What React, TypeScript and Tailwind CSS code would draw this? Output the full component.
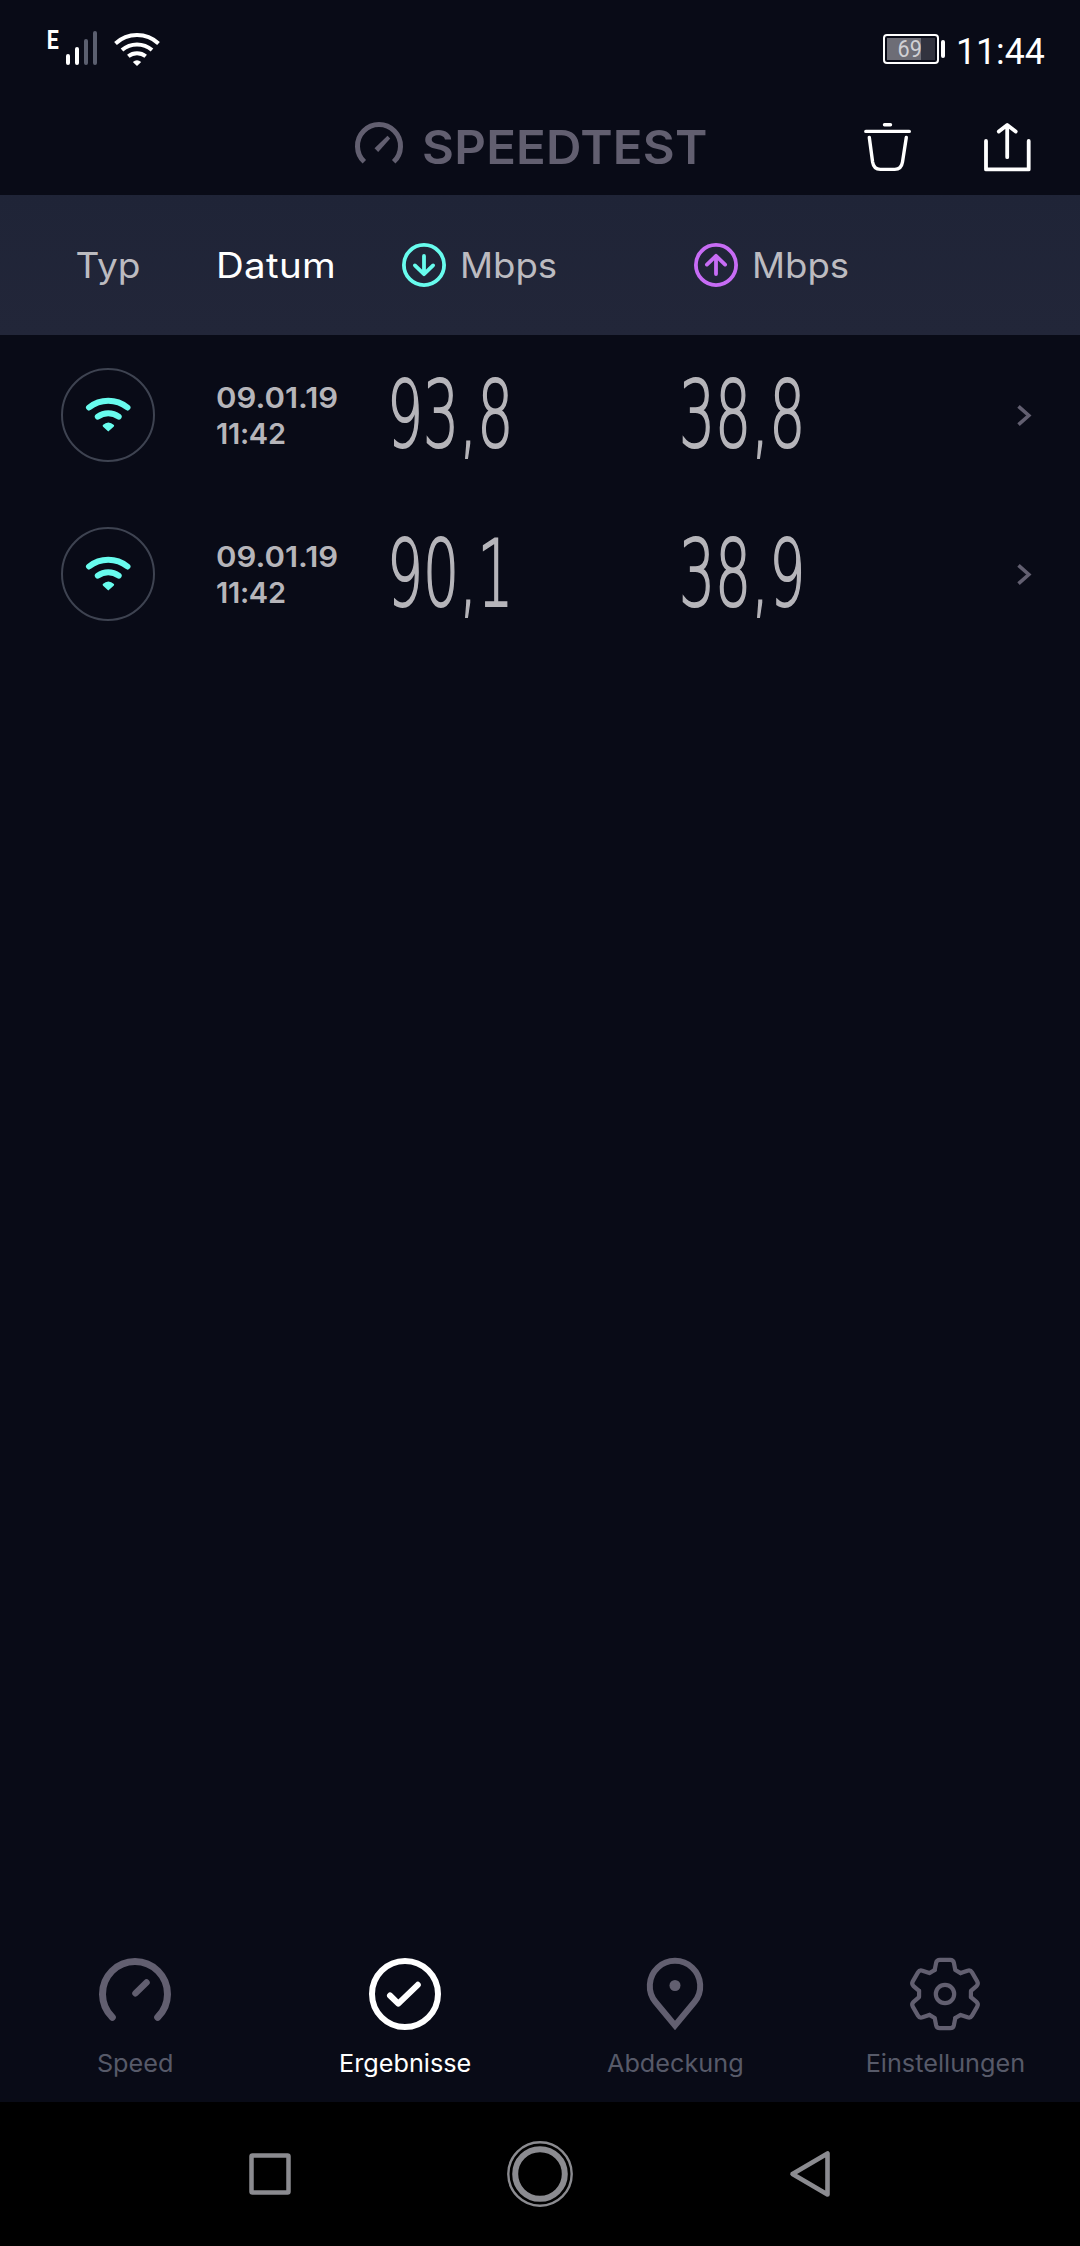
import type { ReactNode } from 'react'

interface Result {
  date: string
  time: string
  down: string
  up: string
}

const results: Result[] = [
  { date: '09.01.19', time: '11:42', down: '93,8', up: '38,8' },
  { date: '09.01.19', time: '11:42', down: '90,1', up: '38,9' },
]

function StatusBar() {
  return (
    <div className="flex h-[98px] items-start justify-between pl-[46px] pr-[37px] pt-[28px]">
      <div className="flex items-start">
        <span className="w-[18px] origin-left scale-x-[0.82] pl-[1px] font-[Roboto] text-[26px] leading-[24px] font-bold text-white">
          E
        </span>
        <svg width="98" height="40" viewBox="64 28 98 40" fill="none">
          <rect x="66" y="54" width="4" height="11" rx="2" fill="#fff" />
          <rect x="75" y="47" width="4" height="18" rx="2" fill="#fff" />
          <rect x="84" y="39" width="4" height="26" rx="2" fill="#5b5f6f" />
          <rect x="93" y="31" width="4" height="34" rx="2" fill="#5b5f6f" />
          <g stroke="#fff" strokeWidth="4">
            <path d="M115.5 43.5a31.6 31.6 0 0 1 43 0" />
            <path d="M122 50a23 23 0 0 1 30 0" />
            <path d="M128.3 56.2a14 14 0 0 1 17.4 0" />
          </g>
          <path d="M132.8 62q4.2-3.6 8.4 0l-4.2 4z" fill="#fff" />
        </svg>
      </div>

      <div className="flex items-start">
        <div className="mt-[6px] flex items-center gap-[2px]">
          <div className="flex h-[30px] w-[56px] items-center rounded-[4px] border-2 border-white p-[2px]">
            <div className="flex h-full w-full items-center justify-center bg-[linear-gradient(90deg,#6d6d76_70%,#32333f_70%)] font-[Roboto] text-[24px] leading-none text-[#d0d0d4]">
              <span className="origin-center scale-x-[0.9] pr-[3px]">69</span>
            </div>
          </div>
          <div className="h-[18px] w-[4px] rounded-[2px] bg-white" />
        </div>
        <span className="ml-[11px] mt-[4px] w-[87px] origin-left scale-x-[0.99] font-[Roboto] text-[36px] leading-[40px] text-white">
          11:44
        </span>
      </div>
    </div>
  )
}

function AppHeader() {
  return (
    <header className="flex h-[97px] items-start pl-[352px] pt-[20px]">
      <svg width="68" height="60" viewBox="352 118 68 60" fill="none">
        <path d="M364.3 161.8a21.5 21.5 0 1 1 29.4 0" stroke="#625f70" strokeWidth="5" />
        <path d="M374.5 148.3l13-12.6 2.7 2.8-12 13.4z" fill="#625f70" />
      </svg>
      <h1 className="w-[436px] origin-left scale-x-[1.045] pl-[2px] font-[Inter] text-[47px] leading-[58px] font-semibold tracking-[0.2px] text-[#625f70]">
        SPEEDTEST
      </h1>
      <svg width="60" height="60" viewBox="856 118 60 60" fill="none" stroke="#fff" strokeWidth="3.4" strokeLinecap="round">
        <path d="M884.5 124.7h6M865.8 131.4h43.5" />
        <path d="M869.3 137.5l3.3 24.5c.8 5 3.4 7.4 7.7 7.4h14.5c4.3 0 6.9-2.4 7.7-7.4l3.8-24.5" />
      </svg>
      <svg
        className="ml-[60px]"
        width="60"
        height="60"
        viewBox="976 118 60 60"
        fill="none"
        stroke="#fff"
        strokeWidth="3.8"
        strokeLinecap="round"
        strokeLinejoin="round"
      >
        <path d="M986 141v28.4h42.7V141M1007.2 125.2v32M998.8 131.6l8.4-6.6 8.5 6.6" />
      </svg>
    </header>
  )
}

function DirectionIcon({ up }: { up?: boolean }) {
  return (
    <svg
      className={up ? 'rotate-180 text-[#c76cf5]' : 'text-[#68fcee]'}
      width="44"
      height="44"
      viewBox="0 0 44 44"
      fill="none"
      stroke="currentColor"
      strokeWidth="3.8"
      strokeLinecap="round"
      strokeLinejoin="round"
    >
      <circle cx="22" cy="22" r="20.1" />
      <path d="M22 13v18M12.9 22.4l9.1 8.8 9.1-8.8" />
    </svg>
  )
}

function TableHead() {
  return (
    <div className="grid h-[140px] grid-cols-[216px_174px_292px_1fr] items-center bg-linear-to-b from-[#1f2437] to-[#222639] font-[Inter] text-[35px] text-[#bcbbc0]">
      <span className="scale-x-[1.06] text-center">Typ</span>
      <span className="origin-left scale-x-[1.1] tracking-[0.3px] text-white">Datum</span>
      <div className="flex items-center gap-[14px] pl-[12px]">
        <DirectionIcon />
        <span className="origin-left scale-x-[1.045]">Mbps</span>
      </div>
      <div className="flex items-center gap-[14px] pl-[12px]">
        <DirectionIcon up />
        <span className="origin-left scale-x-[1.045]">Mbps</span>
      </div>
    </div>
  )
}

function Speed({ children }: { children: ReactNode }) {
  return (
    <span className="-ml-[3px] block w-0 origin-left scale-x-[0.61] pt-[2px] font-['DejaVu_Sans'] text-[93px] leading-none font-extralight whitespace-nowrap text-[#b6b5ba] [-webkit-text-stroke:2px_#b6b5ba]">
      {children}
    </span>
  )
}

function ResultRow({ result }: { result: Result }) {
  return (
    <li className="grid h-[159px] grid-cols-[216px_174px_292px_1fr_50px] items-center">
      <div className="mx-auto flex size-[94px] items-center justify-center rounded-full border-2 border-[#3e4351]">
        <svg width="48" height="40" viewBox="84 395 48 40" fill="none" stroke="#68fcee" strokeWidth="6" strokeLinecap="round">
          <path d="M89 407.5a31 31 0 0 1 38.5 0" />
          <path d="M97.8 416.6a17.5 17.5 0 0 1 20.9 0" />
          <path d="M102.8 425q5.5-5 11.2 0 .4 1-.4 1.8l-5.3 4.7-5.2-4.7q-.7-.8-.3-1.8z" fill="#68fcee" stroke="none" />
        </svg>
      </div>
      <div className="pt-[3px] font-[Inter] text-[29px] leading-[36px] font-semibold text-[#b6b5ba]">
        <div className="origin-left scale-x-[1.07]">{result.date}</div>
        <div className="tracking-[-0.3px]">{result.time}</div>
      </div>
      <Speed>{result.down}</Speed>
      <Speed>{result.up}</Speed>
      <svg className="-ml-[16px]" width="20" height="26" viewBox="1014 402 20 26" fill="none" stroke="#625f70" strokeWidth="3.6">
        <path d="M1018.5 406.3l10.3 9.2-10.3 9.2" />
      </svg>
    </li>
  )
}

function Tab({ label, active, children }: { label: string; active?: boolean; children: ReactNode }) {
  return (
    <div className={`flex flex-col items-center ${active ? 'text-white' : 'text-[#625f70]'}`}>
      <svg width="80" height="80" viewBox="-40 -40 80 80" fill="none" stroke="currentColor" strokeWidth="6" strokeLinecap="round">
        {children}
      </svg>
      <span className={`mt-[14px] scale-x-[1.03] font-[Inter] text-[24.5px] leading-[30px] ${active ? '' : 'text-[#575a69]'}`}>
        {label}
      </span>
    </div>
  )
}

function TabBar() {
  return (
    <nav className="grid h-[148px] grid-cols-4">
      <Tab label="Speed">
        <path d="M-22.7 23.3a32.5 32.5 0 1 1 45.4 0" strokeWidth="7" />
        <path d="M.5-.7 11.5-11.5" strokeWidth="6.5" />
      </Tab>
      <Tab label="Ergebnisse" active>
        <circle r="33" />
        <path d="M-15 1.5l8.3 8.2L12.8-9.2" strokeLinejoin="round" />
      </Tab>
      <Tab label="Abdeckung">
        <path d="M0 31.5-19.5 8A25.2 25.2 0 1 1 19.5 8z" />
        <circle cy="-8.5" r="5.5" fill="currentColor" stroke="none" />
      </Tab>
      <Tab label="Einstellungen">
        {/* one tooth plus the edge to the next, repeated around the hub */}
        {[0, 60, 120, 180, 240, 300].map((angle) => (
          <path
            key={angle}
            d="M-10.3-24-8.9-31.2Q-8.2-34.2-5.2-34.2H5.2Q8.2-34.2 8.9-31.2L10.3-24 15.6-20.9"
            transform={`rotate(${angle})`}
            strokeWidth="4.2"
            strokeLinejoin="round"
          />
        ))}
        <circle r="9.2" strokeWidth="4.2" />
      </Tab>
    </nav>
  )
}

function SystemNav() {
  return (
    <div className="flex h-[144px] items-center justify-between bg-black px-[230px] text-[#8b8b90]">
      <svg width="80" height="80" viewBox="-40 -40 80 80" fill="none" stroke="currentColor" strokeWidth="4.5">
        <rect x="-18.5" y="-18.5" width="37" height="37" rx="1" />
      </svg>
      <svg width="80" height="80" viewBox="-40 -40 80 80" fill="none" stroke="currentColor">
        <circle r="31.7" strokeWidth="2.4" />
        <circle r="24.8" strokeWidth="6" />
      </svg>
      <svg width="80" height="80" viewBox="-40 -40 80 80" fill="none" stroke="currentColor" strokeWidth="4.6" strokeLinejoin="round">
        <path d="M-17.5 0 17.5-20.5V20.5z" />
      </svg>
    </div>
  )
}

export default function App() {
  return (
    <div className="flex h-[2246px] w-[1080px] flex-col overflow-hidden bg-[#090b17]">
      <StatusBar />
      <AppHeader />
      <TableHead />
      <ul className="flex-1">
        {results.map((result) => (
          <ResultRow key={result.down} result={result} />
        ))}
      </ul>
      <TabBar />
      <SystemNav />
    </div>
  )
}
